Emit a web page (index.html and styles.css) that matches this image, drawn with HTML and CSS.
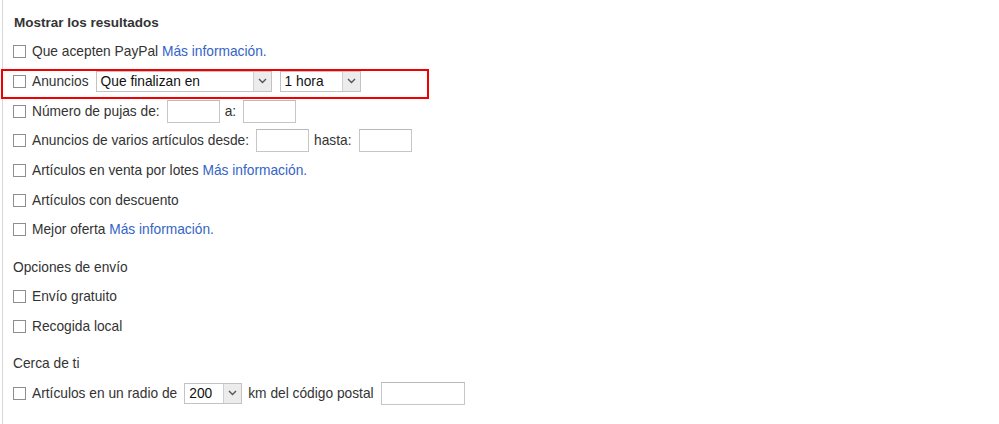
FILE: index.html
```html
<!DOCTYPE html>
<html lang="es">
<head>
<meta charset="utf-8">
<title>Mostrar los resultados</title>
<link rel="stylesheet" href="styles.css">
</head>
<body>
<div class="panel">
  <div class="heading bold">Mostrar los resultados</div>
  <div class="row"><input type="checkbox" class="cb"><span>Que acepten PayPal <a href="#" class="link">Más información.</a></span></div>
  <div class="row highlight"><input type="checkbox" class="cb"><span>Anuncios</span>
    <div class="select sel-long"><span class="sel-text">Que finalizan en</span><span class="sel-arrow"><svg width="9" height="6" viewBox="0 0 9 6"><path d="M1 1 L4.5 4.5 L8 1" fill="none" stroke="#555" stroke-width="1.4"/></svg></span></div>
    <div class="select sel-hour"><span class="sel-text">1 hora</span><span class="sel-arrow"><svg width="9" height="6" viewBox="0 0 9 6"><path d="M1 1 L4.5 4.5 L8 1" fill="none" stroke="#555" stroke-width="1.4"/></svg></span></div>
  </div>
  <div class="row"><input type="checkbox" class="cb"><span>Número de pujas de:</span><input type="text" class="field"><span>a:</span><input type="text" class="field"></div>
  <div class="row"><input type="checkbox" class="cb"><span>Anuncios de varios artículos desde:</span><input type="text" class="field"><span>hasta:</span><input type="text" class="field"></div>
  <div class="row"><input type="checkbox" class="cb"><span>Artículos en venta por lotes <a href="#" class="link">Más información.</a></span></div>
  <div class="row"><input type="checkbox" class="cb"><span>Artículos con descuento</span></div>
  <div class="row"><input type="checkbox" class="cb"><span>Mejor oferta <a href="#" class="link">Más información.</a></span></div>

  <div class="heading section">Opciones de envío</div>
  <div class="row"><input type="checkbox" class="cb"><span>Envío gratuito</span></div>
  <div class="row"><input type="checkbox" class="cb"><span>Recogida local</span></div>

  <div class="heading section">Cerca de ti</div>
  <div class="row"><input type="checkbox" class="cb"><span>Artículos en un radio de</span>
    <div class="select sel-km"><span class="sel-text">200</span><span class="sel-arrow"><svg width="9" height="6" viewBox="0 0 9 6"><path d="M1 1 L4.5 4.5 L8 1" fill="none" stroke="#555" stroke-width="1.4"/></svg></span></div>
    <span class="after-sel">km del código postal</span><input type="text" class="field field-zip">
  </div>
</div>
</body>
</html>
```

FILE: styles.css
```css
html, body {
  margin: 0;
  padding: 0;
  background: #ffffff;
}

body {
  font-family: "Liberation Sans", Arial, sans-serif;
  font-size: 13.75px;
  color: #333333;
}

.panel {
  margin-left: 2px;
  border-left: 1px solid #d6d6d6;
  padding: 7.2px 0 20px 10px;
  min-height: 400px;
}

.heading {
  height: 29.7px;
  display: flex;
  align-items: center;
}

.bold {
  font-weight: bold;
  font-size: 13.5px;
  padding-left: 1px;
}

.section {
  margin-top: 7.5px;
}

.row {
  height: 29.7px;
  display: flex;
  align-items: center;
  white-space: nowrap;
  position: relative;
}

.cb {
  -webkit-appearance: none;
  appearance: none;
  width: 13px;
  height: 13px;
  box-sizing: border-box;
  border: 1px solid #8e8e8e;
  background: #ffffff;
  margin: 0 6px 0 0;
  flex: none;
}

.link {
  color: #3464c6;
  text-decoration: none;
}

.field {
  width: 53px;
  height: 23px;
  box-sizing: border-box;
  border: 1px solid #c6c6c6;
  border-top-color: #b8b8b8;
  background: #fff;
  margin: 0 5px 0 7px;
  padding: 0;
  flex: none;
}

.field-zip {
  width: 84px;
}

.select {
  display: flex;
  align-items: stretch;
  height: 21px;
  box-sizing: border-box;
  border: 1px solid #c3c3c3;
  background: #fff;
  color: #111;
  flex: none;
}

.sel-text {
  flex: 1;
  display: flex;
  align-items: center;
  padding-left: 4px;
}

.sel-arrow {
  width: 17px;
  border-left: 1px solid #cfcfcf;
  background: #ececec;
  display: flex;
  align-items: center;
  justify-content: center;
}

.sel-long {
  width: 176px;
  margin-left: 7px;
}

.sel-hour {
  width: 81px;
  margin-left: 8px;
}

.sel-km {
  width: 58px;
  margin-left: 7px;
}

.after-sel {
  margin-left: 6px;
}

.highlight::after {
  content: "";
  position: absolute;
  top: 2px;
  left: -12px;
  width: 428px;
  height: 30px;
  box-sizing: border-box;
  border: 2px solid #f00000;
  pointer-events: none;
}
```
